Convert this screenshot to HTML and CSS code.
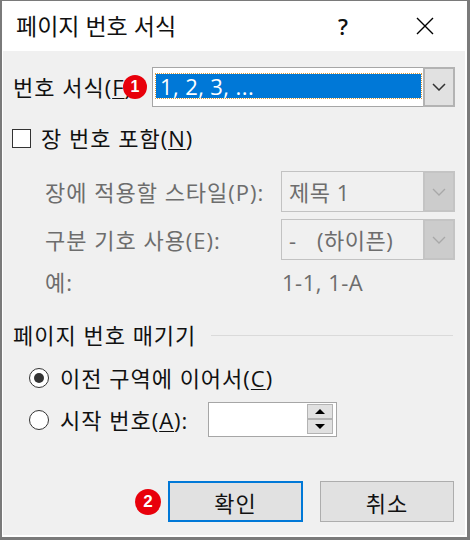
FILE: index.html
```html
<!DOCTYPE html>
<html lang="ko">
<head>
<meta charset="utf-8">
<title>페이지 번호 서식</title>
<link rel="stylesheet" href="styles.css">
</head>
<body>
<div class="window">
  <div class="titlebar">
    <span class="title">페이지 번호 서식</span>
    <span class="tb-btn help">?</span>
    <span class="tb-btn close">
      <svg width="18" height="18" viewBox="0 0 18 18"><path d="M1 1 L17 17 M17 1 L1 17" stroke="#000" stroke-width="1.4" fill="none"/></svg>
    </span>
  </div>
  <div class="content">
    <div class="row row-format">
      <span class="lbl-format">번호 서식(<u>F</u>)</span>
      <span class="badge badge-1">1</span>
      <div class="combo">
        <div class="field"><span class="sel">1, 2, 3, ...</span></div>
        <div class="drop">
          <svg width="14" height="8" viewBox="0 0 14 8"><path d="M1 1 L7 7 L13 1" stroke="#333" stroke-width="1.5" fill="none"/></svg>
        </div>
      </div>
    </div>

    <div class="row row-check">
      <span class="check"></span>
      <span>장 번호 포함(<u>N</u>)</span>
    </div>

    <div class="row row-style indent">
      <span class="dlabel">장에 적용할 스타일(P):</span>
      <div class="combo disabled">
        <div class="field"><span class="val">제목 1</span></div>
        <div class="drop">
          <svg width="14" height="8" viewBox="0 0 14 8"><path d="M1 1 L7 7 L13 1" stroke="#a8a8a8" stroke-width="1.3" fill="none"/></svg>
        </div>
      </div>
    </div>

    <div class="row row-sep indent">
      <span class="dlabel">구분 기호 사용(E):</span>
      <div class="combo disabled">
        <div class="field"><span class="val"><span class="dash">-</span>(하이픈)</span></div>
        <div class="drop">
          <svg width="14" height="8" viewBox="0 0 14 8"><path d="M1 1 L7 7 L13 1" stroke="#a8a8a8" stroke-width="1.3" fill="none"/></svg>
        </div>
      </div>
    </div>

    <div class="row row-example indent">
      <span class="dlabel ex-label">예:</span>
      <span class="dvalue">1-1, 1-A</span>
    </div>

    <div class="row row-section">
      <span>페이지 번호 매기기</span>
      <span class="rule"></span>
    </div>

    <div class="row row-radio1 radio-row">
      <span class="radio checked"></span>
      <span>이전 구역에 이어서(<u>C</u>)</span>
    </div>

    <div class="row row-radio2 radio-row">
      <span class="radio"></span>
      <span class="start-label">시작 번호(<u>A</u>):</span>
      <div class="spin">
        <div class="spin-btns">
          <span class="spin-btn"><span class="tri-up"></span></span>
          <span class="spin-btn"><span class="tri-down"></span></span>
        </div>
      </div>
    </div>

    <div class="row row-buttons">
      <span class="badge badge-2">2</span>
      <button class="btn btn-ok">확인</button>
      <button class="btn">취소</button>
    </div>
  </div>
</div>
</body>
</html>
```

FILE: styles.css
```css
* { box-sizing: border-box; }
html, body { margin: 0; padding: 0; }
body {
  width: 470px;
  height: 540px;
  background: #fff;
  font-family: "Open Sans", "Noto Sans CJK KR", sans-serif;
  font-size: 22px;
  line-height: 24px;
  color: #111;
}
u { text-decoration-thickness: 1px; text-underline-offset: 2px; }

.window {
  width: 470px;
  height: 540px;
  border-style: solid;
  border-color: #7a7a7a;
  border-width: 1px 3px 3px 2px;
  background: #fff;
  display: flex;
  flex-direction: column;
}

.titlebar {
  height: 50px;
  flex-shrink: 0;
  display: flex;
  align-items: center;
}
.title { flex: 1; padding-left: 14px; color: #111; font-size: 23px; }
.tb-btn {
  height: 50px;
  display: flex;
  align-items: center;
  justify-content: center;
}
.help { width: 80px; font-size: 22px; font-weight: 600; }
.close { width: 84px; }

.content {
  flex: 1;
  margin: 0 2px 2px 1px;
  background: #f0f0f0;
  padding: 16px 10px 0 10px;
  display: flex;
  flex-direction: column;
  letter-spacing: 1px;
}

.row { display: flex; align-items: center; position: relative; flex-shrink: 0; }
.indent { padding-left: 32px; }

.row-format { height: 40px; }
.lbl-format { width: 139px; }

.combo {
  flex: 1;
  height: 40px;
  display: flex;
  border: 1px solid #a6a6a6;
  background: #fff;
}
.combo .field { flex: 1; padding: 6px 2px 8px 3px; display: flex; }
.sel {
  flex: 1;
  background: #0078d7;
  color: #fff;
  padding-left: 4px;
  display: flex;
  align-items: center;
  outline: 1px dotted #d99a3a;
  letter-spacing: 0.4px;
}
.drop {
  width: 32px;
  margin: -1px -1px -1px 0;
  border: 2px solid #b3b3b3;
  background: #e1e1e1;
  display: flex;
  align-items: center;
  justify-content: center;
}

.badge {
  position: absolute;
  border-radius: 50%;
  background: #e8000b;
  color: #fff;
  font-family: "Liberation Sans", Arial, sans-serif;
  font-weight: bold;
  letter-spacing: 0;
  display: flex;
  align-items: center;
  justify-content: center;
}
.badge-1 { width: 24px; height: 24px; left: 110px; top: 8px; font-size: 16px; }
.badge-2 { width: 26px; height: 26px; left: 122px; top: 8px; font-size: 17px; }

.row-check { margin-top: 18px; height: 26px; }
.check {
  width: 19px;
  height: 19px;
  border: 1.5px solid #333;
  background: #fff;
  margin-left: -1px;
  margin-right: 10px;
}

.row-style { margin-top: 20px; height: 41px; }
.row-sep { margin-top: 7px; height: 41px; }
.dlabel { width: 236px; color: #6d6d6d; }
.combo.disabled { height: 41px; border-color: #c2c2c2; background: #f0f0f0; }
.combo.disabled .field { padding: 0 0 0 7px; align-items: center; }
.combo.disabled .drop { background: #cccccc; border-color: #c4c4c4; }
.val { color: #6d6d6d; letter-spacing: 0.5px; }
.dash { display: inline-block; width: 28px; }

.row-example { margin-top: 10px; height: 24px; }
.ex-label { width: 237px; }
.dvalue { color: #6d6d6d; letter-spacing: 0.5px; }

.row-section { margin-top: 29px; height: 24px; padding-right: 2px; }
.rule { flex: 1; height: 1px; background: #dadada; margin-left: 15px; }

.radio-row { padding-left: 16px; }
.row-radio1 { margin-top: 19px; height: 24px; }
.row-radio2 { margin-top: 12px; height: 35px; }
.radio {
  width: 20px;
  height: 20px;
  border: 1.5px solid #333;
  border-radius: 50%;
  background: #fff;
  margin-right: 11px;
  display: flex;
  align-items: center;
  justify-content: center;
}
.radio.checked::after {
  content: "";
  width: 10px;
  height: 10px;
  border-radius: 50%;
  background: #333;
}
.start-label { width: 148px; }

.spin {
  width: 129px;
  height: 35px;
  border: 1px solid #a6a6a6;
  background: #fff;
  display: flex;
  justify-content: flex-end;
  padding: 1px 3px 2px 0;
}
.spin-btns { width: 26px; display: flex; flex-direction: column; }
.spin-btn {
  flex: 1;
  background: #e1e1e1;
  border: 1px solid #b3b3b3;
  display: flex;
  align-items: center;
  justify-content: center;
}
.tri-up, .tri-down { width: 0; height: 0; border-left: 5px solid transparent; border-right: 5px solid transparent; }
.tri-up { border-bottom: 5px solid #000; }
.tri-down { border-top: 5px solid #000; }

.row-buttons {
  margin-top: 44px;
  height: 41px;
  justify-content: flex-end;
  gap: 17px;
  padding-right: 1px;
}
.btn {
  height: 41px;
  width: 134px;
  background: #e1e1e1;
  border: 1px solid #adadad;
  font-family: inherit;
  font-size: 22px;
  letter-spacing: 1px;
  color: #111;
  padding: 0;
}
.btn-ok { width: 135px; border: 2px solid #0078d7; }
```
